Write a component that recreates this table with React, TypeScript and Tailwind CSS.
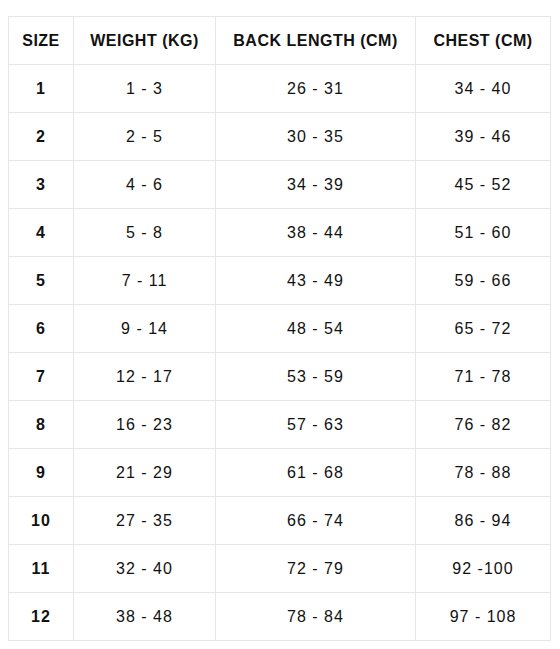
import React from 'react';

const rows: [string, string, string, string][] = [
  ['1', '1 - 3', '26 - 31', '34 - 40'],
  ['2', '2 - 5', '30 - 35', '39 - 46'],
  ['3', '4 - 6', '34 - 39', '45 - 52'],
  ['4', '5 - 8', '38 - 44', '51 - 60'],
  ['5', '7 - 11', '43 - 49', '59 - 66'],
  ['6', '9 - 14', '48 - 54', '65 - 72'],
  ['7', '12 - 17', '53 - 59', '71 - 78'],
  ['8', '16 - 23', '57 - 63', '76 - 82'],
  ['9', '21 - 29', '61 - 68', '78 - 88'],
  ['10', '27 - 35', '66 - 74', '86 - 94'],
  ['11', '32 - 40', '72 - 79', '92 -100'],
  ['12', '38 - 48', '78 - 84', '97 - 108'],
];

const App = () => {
  return (
    <div className="bg-white min-h-[649px] pt-4 pl-2 font-['Liberation_Sans',Arial,sans-serif] text-[#111]">
      <table className="table-fixed border-collapse w-[542px] text-[16px]">
        <colgroup>
          <col className="w-[65px]" />
          <col className="w-[142px]" />
          <col className="w-[200px]" />
          <col className="w-[135px]" />
        </colgroup>
        <thead>
          <tr className="h-12">
            {['SIZE', 'WEIGHT (KG)', 'BACK LENGTH (CM)', 'CHEST (CM)'].map((h) => (
              <th key={h} className="border border-[#e6e6e6] font-bold tracking-[0.5px] text-center p-0">
                {h}
              </th>
            ))}
          </tr>
        </thead>
        <tbody>
          {rows.map((r) => (
            <tr key={r[0]} className="h-12">
              <td className="border border-[#e6e6e6] font-bold text-center tracking-[1px] p-0">{r[0]}</td>
              <td className="border border-[#e6e6e6] text-center tracking-[1px] p-0">{r[1]}</td>
              <td className="border border-[#e6e6e6] text-center tracking-[1px] p-0">{r[2]}</td>
              <td className="border border-[#e6e6e6] text-center tracking-[1px] p-0">{r[3]}</td>
            </tr>
          ))}
        </tbody>
      </table>
    </div>
  );
};

export default App;
